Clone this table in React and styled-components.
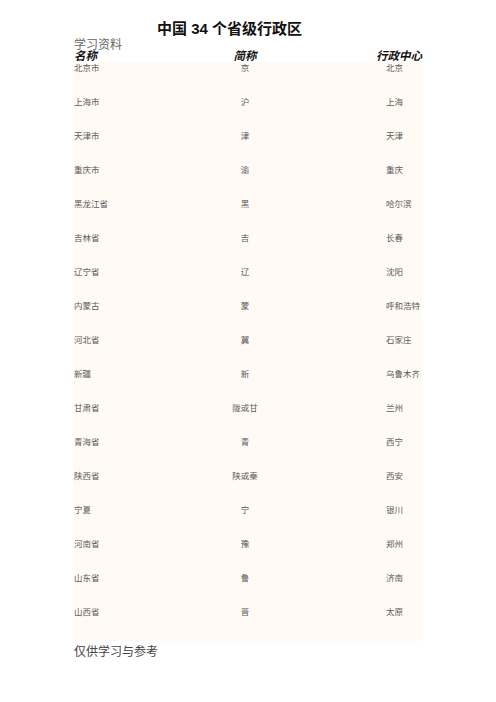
import React from 'react';
import styled, { createGlobalStyle } from 'styled-components';

const GlobalStyle = createGlobalStyle`
  html, body {
    margin: 0;
    padding: 0;
    background: #ffffff;
  }
  body {
    font-family: "Noto Sans CJK SC", "Liberation Sans", sans-serif;
  }
`;

const provinces = [
  ['北京市', '京', '北京'],
  ['上海市', '沪', '上海'],
  ['天津市', '津', '天津'],
  ['重庆市', '渝', '重庆'],
  ['黑龙江省', '黑', '哈尔滨'],
  ['吉林省', '吉', '长春'],
  ['辽宁省', '辽', '沈阳'],
  ['内蒙古', '蒙', '呼和浩特'],
  ['河北省', '冀', '石家庄'],
  ['新疆', '新', '乌鲁木齐'],
  ['甘肃省', '陇或甘', '兰州'],
  ['青海省', '青', '西宁'],
  ['陕西省', '陕或秦', '西安'],
  ['宁夏', '宁', '银川'],
  ['河南省', '豫', '郑州'],
  ['山东省', '鲁', '济南'],
  ['山西省', '晋', '太原'],
];

const Page = styled.div`
  width: 496px;
  height: 702px;
  box-sizing: border-box;
  padding: 21px 0 0 74px;
`;

const Sheet = styled.div`
  width: 348px;
`;

const Title = styled.h1`
  margin: 0 0 0 83px;
  font-family: "Liberation Sans", "Noto Sans CJK SC", sans-serif;
  font-size: 15px;
  line-height: 16px;
  font-weight: 700;
  color: #111;
`;

const Caption = styled.div`
  font-size: 12px;
  line-height: 13px;
  color: #666;
`;

const Grid = styled.div`
  display: grid;
  grid-template-columns: 140px 62px 1fr;
`;

const HeadRow = styled(Grid)`
  height: 12px;
  line-height: 11px;
  font-size: 11.5px;
  font-weight: 700;
  font-style: italic;
  color: #111;
`;

const HeadCell = styled.div`
  text-align: ${({ $align }) => $align || 'left'};
  white-space: nowrap;
`;

const Body = styled.div`
  background: #fffbf4;
  padding-bottom: 1px;
`;

const Row = styled(Grid)`
  height: 34px;
  box-sizing: border-box;
  padding-top: 1px;
  font-size: 8.5px;
  line-height: 9px;
  color: #5a5a5a;
`;

const Cell = styled.div`
  text-align: ${({ $align }) => $align || 'left'};
  padding-left: ${({ $indent }) => $indent || 0}px;
  white-space: nowrap;
`;

const Footer = styled.div`
  margin-top: 3px;
  font-size: 12px;
  line-height: 14px;
  color: #444;
`;

export default function App() {
  return (
    <>
      <GlobalStyle />
      <Page>
        <Sheet>
          <Title>中国 34 个省级行政区</Title>
          <Caption>学习资料</Caption>
          <HeadRow>
            <HeadCell>名称</HeadCell>
            <HeadCell $align="center">简称</HeadCell>
            <HeadCell $align="right">行政中心</HeadCell>
          </HeadRow>
          <Body>
            {provinces.map(([name, abbr, capital]) => (
              <Row key={name}>
                <Cell>{name}</Cell>
                <Cell $align="center">{abbr}</Cell>
                <Cell $indent={110}>{capital}</Cell>
              </Row>
            ))}
          </Body>
          <Footer>仅供学习与参考</Footer>
        </Sheet>
      </Page>
    </>
  );
}
